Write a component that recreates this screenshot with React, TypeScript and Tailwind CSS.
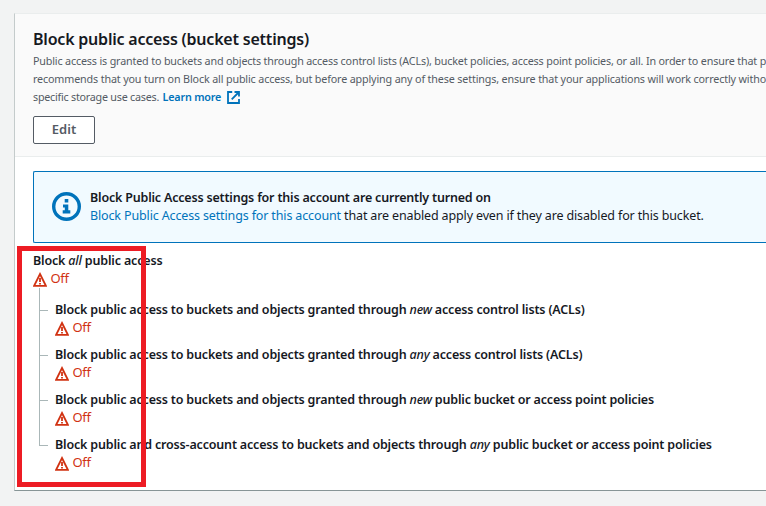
import React from "react";

function WarningIcon() {
  return (
    <svg className="block h-[15px] w-[14px] shrink-0" viewBox="0 0 14 15" fill="none" stroke="#d13212">
      <path d="M7 2 L12.9 13.9 H1.1 Z" strokeWidth="1.8" />
      <path d="M7 6 V9.9 M7 10.9 V12.4" strokeWidth="1.8" />
    </svg>
  );
}

function Status() {
  return (
    <div className="flex h-[18px] items-center text-[13px] leading-[18px] font-normal tracking-[-0.3px] text-[#d13212]">
      <WarningIcon />
      <span className="-mt-[2px] ml-[3.5px]">Off</span>
    </div>
  );
}

type Setting = { before: string; em: string; after: string };

const settings: Setting[] = [
  { before: "Block public access to buckets and objects granted through ", em: "new", after: " access control lists (ACLs)" },
  { before: "Block public access to buckets and objects granted through ", em: "any", after: " access control lists (ACLs)" },
  { before: "Block public access to buckets and objects granted through ", em: "new", after: " public bucket or access point policies" },
  { before: "Block public and cross-account access to buckets and objects through ", em: "any", after: " public bucket or access point policies" },
];

export default function App() {
  return (
    <div className="relative h-[506px] w-full overflow-hidden bg-[#f2f3f3] pt-[13px] pl-[14px] font-['Noto_Sans',sans-serif] whitespace-nowrap text-[#16191f]">
      <main className="h-[478px] border-t border-b border-l border-t-[#eaeded] border-b-[#879596] border-l-[#c4cbcb] bg-white">
        <header className="h-[143px] border-b border-[#eaeded] bg-[#fafafa] pt-[14px] pl-[18px]">
          <h2 className="text-[16px] leading-[22px] font-semibold tracking-[-0.21px]">Block public access (bucket settings)</h2>
          <div className="mt-[2px] text-[10.75px] leading-[18px] text-[#545b64]">
            <p className="tracking-[-0.166px]">Public access is granted to buckets and objects through access control lists (ACLs), bucket policies, access point policies, or all. In order to ensure that p</p>
            <p className="tracking-[-0.15px]">recommends that you turn on Block all public access, but before applying any of these settings, ensure that your applications will work correctly witho</p>
            <p className="flex items-center tracking-[-0.24px]">
              specific storage use cases.
              <a className="ml-[3.5px] flex items-center font-semibold tracking-[-0.2px] text-[#0073bb]">
                Learn more
                <svg className="ml-[6px] h-[13px] w-[13px]" viewBox="0 0 13 13" fill="none" stroke="#0073bb" strokeWidth="1.8">
                  <path d="M5.2 1 H1 V12 H12 V8" />
                  <path d="M7.5 1 H12 V5.6 M12 1 L4.7 8.3" />
                </svg>
              </a>
            </p>
          </div>
          <button className="mt-[10px] flex h-[28px] w-[62px] items-center justify-center rounded-[2px] border border-[#545b64] bg-white pb-[2px] text-[13px] leading-none font-semibold text-[#545b64]">Edit</button>
        </header>

        <section className="pt-[14px] pl-[18px]">
          <div className="flex h-[72px] items-center rounded-l-[2px] border border-r-0 border-[#0073bb] bg-[#f1faff] pl-[18px]">
            <svg className="h-[30px] w-[30px] shrink-0" viewBox="0 0 30 30" fill="none">
              <circle cx="14.5" cy="14.5" r="12.8" stroke="#0073bb" strokeWidth="3.4" />
              <path d="M12.7 7 H16.3 V10.6 H12.7 Z M11 12.4 H16.3 V18.2 H18.3 V21.6 H10.7 V18.2 H12.8 V15.6 H11 Z" fill="#0073bb" />
            </svg>
            <div className="-mt-px ml-2 text-[12.5px] leading-[18px]">
              <p className="font-semibold tracking-[-0.19px]">Block Public Access settings for this account are currently turned on</p>
              <p className="tracking-[-0.14px]">
                <a className="text-[#0073bb]">Block Public Access settings for this account</a> that are enabled apply even if they are disabled for this bucket.
              </p>
            </div>
          </div>

          <div className="mt-[9px] text-[12.5px] leading-[18px] font-semibold">
            <p className="tracking-[-0.17px]">Block <em className="font-medium">all</em> public access</p>
            <Status />
          </div>

          <ul className="text-[12.5px] leading-[18px]">
            {settings.map((s, i) => (
              <li key={i} className={i === 0 ? "flex h-[58px]" : "flex h-[45px]"}>
                <div className="ml-[6px] flex w-[16px] flex-col">
                  <div className={i === 0 ? "h-[23px] w-[9px] border-b border-l border-[#aab7b8]" : "h-[10px] w-[9px] border-b border-l border-[#aab7b8]"} />
                  {i < 3 && <div className="flex-1 border-l border-[#aab7b8]" />}
                </div>
                <div className={i === 0 ? "pt-[13px]" : ""}>
                  <p className="font-semibold tracking-[-0.175px]">{s.before}<em className="font-medium">{s.em}</em>{s.after}</p>
                  <Status />
                </div>
              </li>
            ))}
          </ul>
        </section>
      </main>
      <div className="absolute top-[246px] left-[17px] h-[241px] w-[129px] border-[5px] border-[#ed1c24]" />
    </div>
  );
}
